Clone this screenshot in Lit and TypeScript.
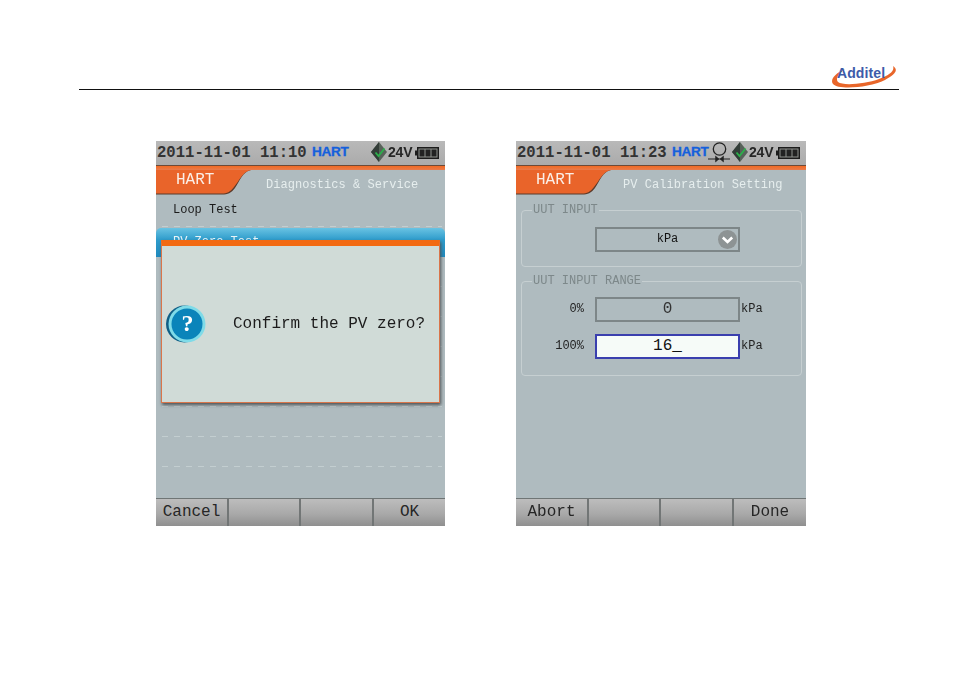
import { LitElement, html, css, svg } from "lit";
import { customElement, property } from "lit/decorators.js";

const mono = css`"Liberation Mono", "DejaVu Sans Mono", monospace`;

@customElement("status-bar")
class StatusBar extends LitElement {
  @property() time = "";
  @property({ type: Boolean }) loop = false;
  static styles = css`
    :host { display: flex; align-items: center; height: 24px; background: linear-gradient(#b9b9b9, #ababab); color: #333; padding-left: 1px; }
    .date { font: bold 15.6px/24px ${mono}; width: 155px; white-space: nowrap; flex: none; color: #333; }
    .hart { font: bold 13.6px/24px "Liberation Sans", sans-serif; color: #1560dc; width: 36px; letter-spacing: -0.35px; margin-top: -2px; flex: none; -webkit-text-stroke: 0.3px #1560dc; }
    .loop { flex: none; width: 24px; height: 22px; display: block; }
    .gap { flex: 1; }
    .dia { flex: none; width: 16px; height: 20px; display: block; margin-top: -2px; }
    .v { font: bold 14px/24px "Liberation Sans", sans-serif; color: #262626; width: 28px; flex: none; margin-top: -2px; letter-spacing: -0.2px; padding-left: 1px; box-sizing: border-box; }
    .bat { flex: none; width: 24px; height: 12px; display: block; margin-right: 6px; margin-top: -1px; }
  `;
  render() {
    return html`
      <span class="date">${this.time}</span>
      <span class="hart">HART</span>
      ${this.loop
        ? html`<svg class="loop" viewBox="0 0 24 22" fill="none" stroke="#222">
            <circle cx="11.500" cy="7" r="6.200" stroke-width="1.300" />
            <path d="M0 17H22" stroke-width="1" />
            <path d="M7.500 14l3.500 3-3.500 3zM15.500 14l-3.500 3 3.500 3z" fill="#222" stroke-width=".5" />
          </svg>`
        : ""}
      <span class="gap"></span>
      <svg class="dia" viewBox="0 0 16 20">
        <path d="M8 0 16 10 8 20 0 10Z" fill="#58625a" />
        <path d="M8 0 0 10 8 20Z" fill="#333d38" />
        <path d="M4.500 10.500 7.500 14 13.500 6.500" fill="none" stroke="#2bb04a" stroke-width="1.800" />
      </svg>
      <span class="v">24V</span>
      <svg class="bat" viewBox="0 0 24 12">
        <rect x="2" y="0" width="22" height="12" fill="#1c1c1c" />
        <rect x="0" y="3.500" width="2" height="5" fill="#1c1c1c" />
        <rect x="3.500" y="1.500" width="19" height="9" fill="#8f928e" />
        <rect x="4.500" y="2.500" width="5" height="7" fill="#222" />
        <rect x="10.500" y="2.500" width="5" height="7" fill="#222" />
        <rect x="16.500" y="2.500" width="5" height="7" fill="#222" />
      </svg>
    `;
  }
}

@customElement("title-bar")
class TitleBar extends LitElement {
  @property() heading = "";
  @property({ type: Number }) indent = 110;
  static styles = css`
    :host { display: block; border-top: 1px solid #6d4a38; }
    .line { height: 4px; background: linear-gradient(#f26a22, #e87b4c); }
    .row { display: flex; height: 25px; }
    .tab { position: relative; flex: none; width: 96px; }
    .tab svg { position: absolute; inset: 0; width: 96px; height: 25px; display: block; }
    .name { position: relative; display: block; font: 16px/21px ${mono}; color: #fbeee6; padding-left: 20px; }
    .heading { font: 12px/30px ${mono}; color: #e6eeee; letter-spacing: 0.05px; white-space: pre; }
  `;
  render() {
    return html`
      <div class="line"></div>
      <div class="row">
        <div class="tab">
          <svg viewBox="0 0 96 25">
            <path d="M0 0H95C86 2 84 11 79 18 75 23 72 24.500 66 24.500H0Z" fill="#5b3a2a" />
            <path d="M0 0H95C86 2 84 10 78 17 74 22 71 23.500 66 23.500H0Z" fill="#e9642a" />
          </svg>
          <span class="name">HART</span>
        </div>
        <span class="heading" style="margin-left:${this.indent - 96}px">${this.heading}</span>
      </div>
    `;
  }
}

@customElement("soft-keys")
class SoftKeys extends LitElement {
  @property({ type: Array }) keys: string[] = [];
  static styles = css`
    :host { display: grid; grid-template-columns: 73px 72px 73px 1fr; height: 28px; border-top: 1px solid #6f7575; background: linear-gradient(#bdbdbd, #a9a9a9 55%, #8f8f8f); box-sizing: border-box; }
    span { font: 16px/27px ${mono}; color: #262626; text-align: center; border-right: 2px solid #727676; }
    span:last-child { border-right: none; }
  `;
  render() {
    return this.keys.map((k) => html`<span>${k}</span>`);
  }
}

@customElement("list-screen")
class ListScreen extends LitElement {
  static styles = css`
    :host { display: flex; flex-direction: column; width: 289px; height: 385px; background: #afbbbf; position: relative; }
    .list { flex: 1; display: flex; flex-direction: column; padding-top: 2px; overflow: hidden; }
    .row { height: 30px; flex: none; box-sizing: border-box; padding-left: 14px; font: 12px/26px ${mono}; color: #1a1a1a; background: repeating-linear-gradient(90deg, transparent 0 3px, #c3ced0 3px 9px, transparent 9px 12px) 0 100% / 100% 1px no-repeat; margin: 0 3px; }
    .row.sel { height: 29px; margin: 1px 0 0; padding-left: 17px; line-height: 28px; background: linear-gradient(#69c3e3, #2f9ccb 40%, #1e88bc); border-radius: 5px 5px 0 0; color: #e8f4f8; }
    .dialog { position: absolute; left: 5px; top: 99px; width: 279px; height: 163px; box-sizing: border-box; background: #d0dbd7; border: 1px solid #d9754a; border-top: 6px solid #f26a12; box-shadow: 1px 2px 3px #4f5658; display: flex; align-items: center; }
    .q { flex: none; width: 40px; height: 40px; margin: 0 0 0 4px; position: relative; }
    .q svg { display: block; width: 40px; height: 40px; }
    .q b { position: absolute; inset: 0 0 0 3px; text-align: center; font: bold 24px/38px "Liberation Serif", serif; color: #fff; }
    .msg { font: 16px/20px ${mono}; color: #1c1c1c; margin-left: 27px; white-space: nowrap; }
  `;
  render() {
    return html`
      <status-bar time="2011-11-01 11:10"></status-bar>
      <title-bar heading="Diagnostics &amp; Service" indent="110"></title-bar>
      <div class="list">
        <div class="row">Loop Test</div>
        <div class="row sel">PV Zero Test</div>
        <div class="row"></div><div class="row"></div><div class="row"></div><div class="row"></div>
        <div class="row"></div><div class="row"></div><div class="row"></div>
      </div>
      <soft-keys .keys=${["Cancel", "", "", "OK"]}></soft-keys>
      <div class="dialog">
        <div class="q">
          <svg viewBox="0 0 40 40">
            <circle cx="18.500" cy="20" r="18.500" fill="#0f5f86" />
            <circle cx="21" cy="20" r="18.500" fill="#7fdbe8" />
            <circle cx="21" cy="20" r="15.500" fill="#0a84ba" />
          </svg>
          <b>?</b>
        </div>
        <span class="msg">Confirm the PV zero?</span>
      </div>
    `;
  }
}

@customElement("setting-screen")
class SettingScreen extends LitElement {
  static styles = css`
    :host { display: flex; flex-direction: column; width: 290px; height: 385px; background: #afbbbf; }
    .body { flex: 1; padding: 8px 4px 0 5px; display: flex; flex-direction: column; gap: 7px; }
    fieldset { margin: 0; border: 1px solid #c6cfd1; border-radius: 4px; padding: 0; box-sizing: border-box; }
    legend { font: 12px/14px ${mono}; color: #7d888a; margin-left: 10px; padding: 0 1px; letter-spacing: 0; }
    .in1 { height: 64px; padding-top: 10px; }
    .in2 { height: 102px; padding-top: 9px; display: flex; flex-direction: column; gap: 12px; }
    .r { display: grid; grid-template-columns: 62px 145px auto; column-gap: 11px; align-items: center; height: 25px; }
    .lab { font: 12px/25px ${mono}; text-align: right; color: #222; }
    .f { grid-column: 2; height: 25px; box-sizing: border-box; border: 2px solid #7d8688; font: 16px/21px ${mono}; text-align: center; color: #333; position: relative; }
    .f.on { border-color: #3a3fae; background: #f6fbf8; color: #111; }
    .unit { font: 12px/25px ${mono}; margin-left: -10px; color: #222; }
    .sel { font: 12px/21px ${mono}; color: #111; }
    .chev { position: absolute; right: 1px; top: 1px; width: 19px; height: 19px; display: block; }
  `;
  render() {
    return html`
      <status-bar time="2011-11-01 11:23" loop></status-bar>
      <title-bar heading="PV Calibration Setting" indent="107"></title-bar>
      <div class="body">
        <fieldset class="in1">
          <legend>UUT INPUT</legend>
          <div class="r">
            <span class="f sel">kPa
              <svg class="chev" viewBox="0 0 19 19">
                <circle cx="9.500" cy="9.500" r="9.500" fill="#8d9394" />
                <path d="M4.800 7.500 9.500 12 14.200 7.500" fill="none" stroke="#fff" stroke-width="2.600" />
              </svg>
            </span>
          </div>
        </fieldset>
        <fieldset class="in2">
          <legend>UUT INPUT RANGE</legend>
          <div class="r"><span class="lab">0%</span><span class="f">0</span><span class="unit">kPa</span></div>
          <div class="r"><span class="lab">100%</span><span class="f on">16_</span><span class="unit">kPa</span></div>
        </fieldset>
      </div>
      <soft-keys .keys=${["Abort", "", "", "Done"]}></soft-keys>
    `;
  }
}

@customElement("app-root")
class AppRoot extends LitElement {
  static styles = css`
    :host { display: block; width: 954px; height: 674px; background: #fff; overflow: hidden; }
    header { height: 90px; box-sizing: border-box; margin: 0 55px 0 79px; border-bottom: 1px solid #111; display: flex; justify-content: flex-end; align-items: flex-end; }
    .logo { position: relative; width: 66px; height: 25px; margin: 0 2px 1px 0; }
    .logo svg { position: absolute; inset: 0; width: 66px; height: 25px; display: block; }
    .logo span { position: absolute; left: 6px; top: 2px; font: bold 14px/16px "Liberation Sans", sans-serif; color: #3d5ba9; letter-spacing: 0.1px; }
    .screens { display: flex; gap: 71px; padding: 51px 0 0 156px; }
    .screens > * { filter: blur(0.35px); }
  `;
  render() {
    return html`
      <header>
        <div class="logo">
          <svg viewBox="0 0 66 25">
            ${svg`<path d="M14 6C3 11-1 17 2 21 7 27 38 25 54 17 64 12 68 7 62 3 64 8 58 12 48 16 34 21 12 23 7 19 4 16 8 10 14 6Z" fill="#e8662a" />`}
          </svg>
          <span>Additel</span>
        </div>
      </header>
      <div class="screens">
        <list-screen></list-screen>
        <setting-screen></setting-screen>
      </div>
    `;
  }
}
